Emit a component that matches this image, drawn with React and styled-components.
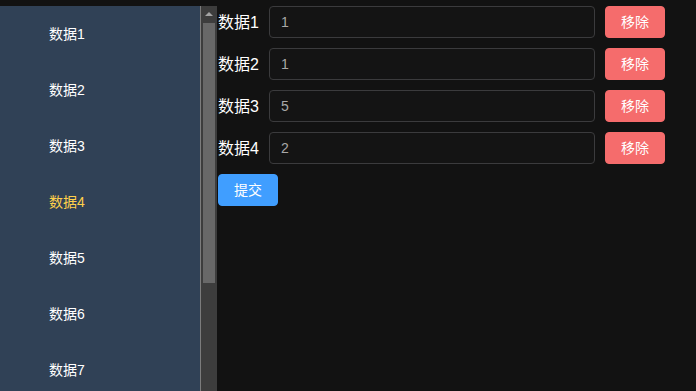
import React, { useState } from "react";
import styled, { createGlobalStyle } from "styled-components";

const Global = createGlobalStyle`
  html, body { margin: 0; padding: 0; background: #121212; overflow: hidden; }
  body { font-family: "Liberation Sans", "Noto Sans CJK SC", sans-serif; }
  * { box-sizing: border-box; }
`;

const Layout = styled.div`
  display: flex;
  height: 100vh;
  padding-top: 6px;
`;

const Sidebar = styled.aside`
  flex: 0 0 217px;
  height: 100%;
  display: flex;
`;

const MenuList = styled.nav`
  width: 200px;
  height: 100%;
  overflow: hidden;
  background: #304156;
`;

const MenuItem = styled.div`
  height: 56px;
  display: flex;
  align-items: center;
  padding-left: 49px;
  padding-bottom: 2px;
  font-size: 14px;
  color: ${(p) => (p.$active ? "#ffd04b" : "#ffffff")};
`;

const ScrollTrack = styled.div`
  width: 17px;
  height: 100%;
  background: #3d3d3d;
  border-left: 1px solid #7c7c7c;
  display: flex;
  flex-direction: column;
`;

const ScrollButton = styled.div`
  height: 17px;
  display: flex;
  align-items: center;
  justify-content: center;
`;

const ArrowUp = styled.span`
  width: 0;
  height: 0;
  border-left: 4px solid transparent;
  border-right: 4px solid transparent;
  border-bottom: 4px solid #a3a3a3;
  margin-bottom: 2px;
`;

const Thumb = styled.div`
  height: 260px;
  margin: 0 2px;
  background: #686868;
`;

const Main = styled.main`
  flex: 1;
  display: flex;
  flex-direction: column;
  gap: 10px;
  padding-left: 1px;
`;

const Row = styled.div`
  display: flex;
  align-items: center;
  gap: 10px;
  height: 32px;
`;

const Label = styled.span`
  font-size: 16px;
  color: #ffffff;
  width: 41px;
  white-space: nowrap;
  padding-bottom: 2px;
`;

const Input = styled.input`
  width: 326px;
  height: 32px;
  background: #141414;
  border: 1px solid #3b3b3d;
  border-radius: 4px;
  color: #a8a8a8;
  font-size: 14px;
  padding: 0 11px;
  font-family: inherit;
  outline: none;
`;

const Button = styled.button`
  height: 32px;
  width: 60px;
  border: 1px solid ${(p) => (p.$kind === "danger" ? "#f56c6c" : "#409eff")};
  background: ${(p) => (p.$kind === "danger" ? "#f56c6c" : "#409eff")};
  color: #fff;
  border-radius: 4px;
  font-size: 14px;
  font-family: inherit;
  padding: 0 0 2px;
  cursor: pointer;
`;

const items = ["数据1", "数据2", "数据3", "数据4", "数据5", "数据6", "数据7", "数据8", "数据9"];

export default function App() {
  const [rows] = useState([
    { label: "数据1", value: "1" },
    { label: "数据2", value: "1" },
    { label: "数据3", value: "5" },
    { label: "数据4", value: "2" },
  ]);
  return (
    <>
      <Global />
      <Layout>
        <Sidebar>
          <MenuList>
            {items.map((t) => (
              <MenuItem key={t} $active={t === "数据4"}>{t}</MenuItem>
            ))}
          </MenuList>
          <ScrollTrack>
            <ScrollButton>
              <ArrowUp />
            </ScrollButton>
            <Thumb />
          </ScrollTrack>
        </Sidebar>
        <Main>
          {rows.map((r) => (
            <Row key={r.label}>
              <Label>{r.label}</Label>
              <Input defaultValue={r.value} />
              <Button $kind="danger">移除</Button>
            </Row>
          ))}
          <Row>
            <Button $kind="primary">提交</Button>
          </Row>
        </Main>
      </Layout>
    </>
  );
}
